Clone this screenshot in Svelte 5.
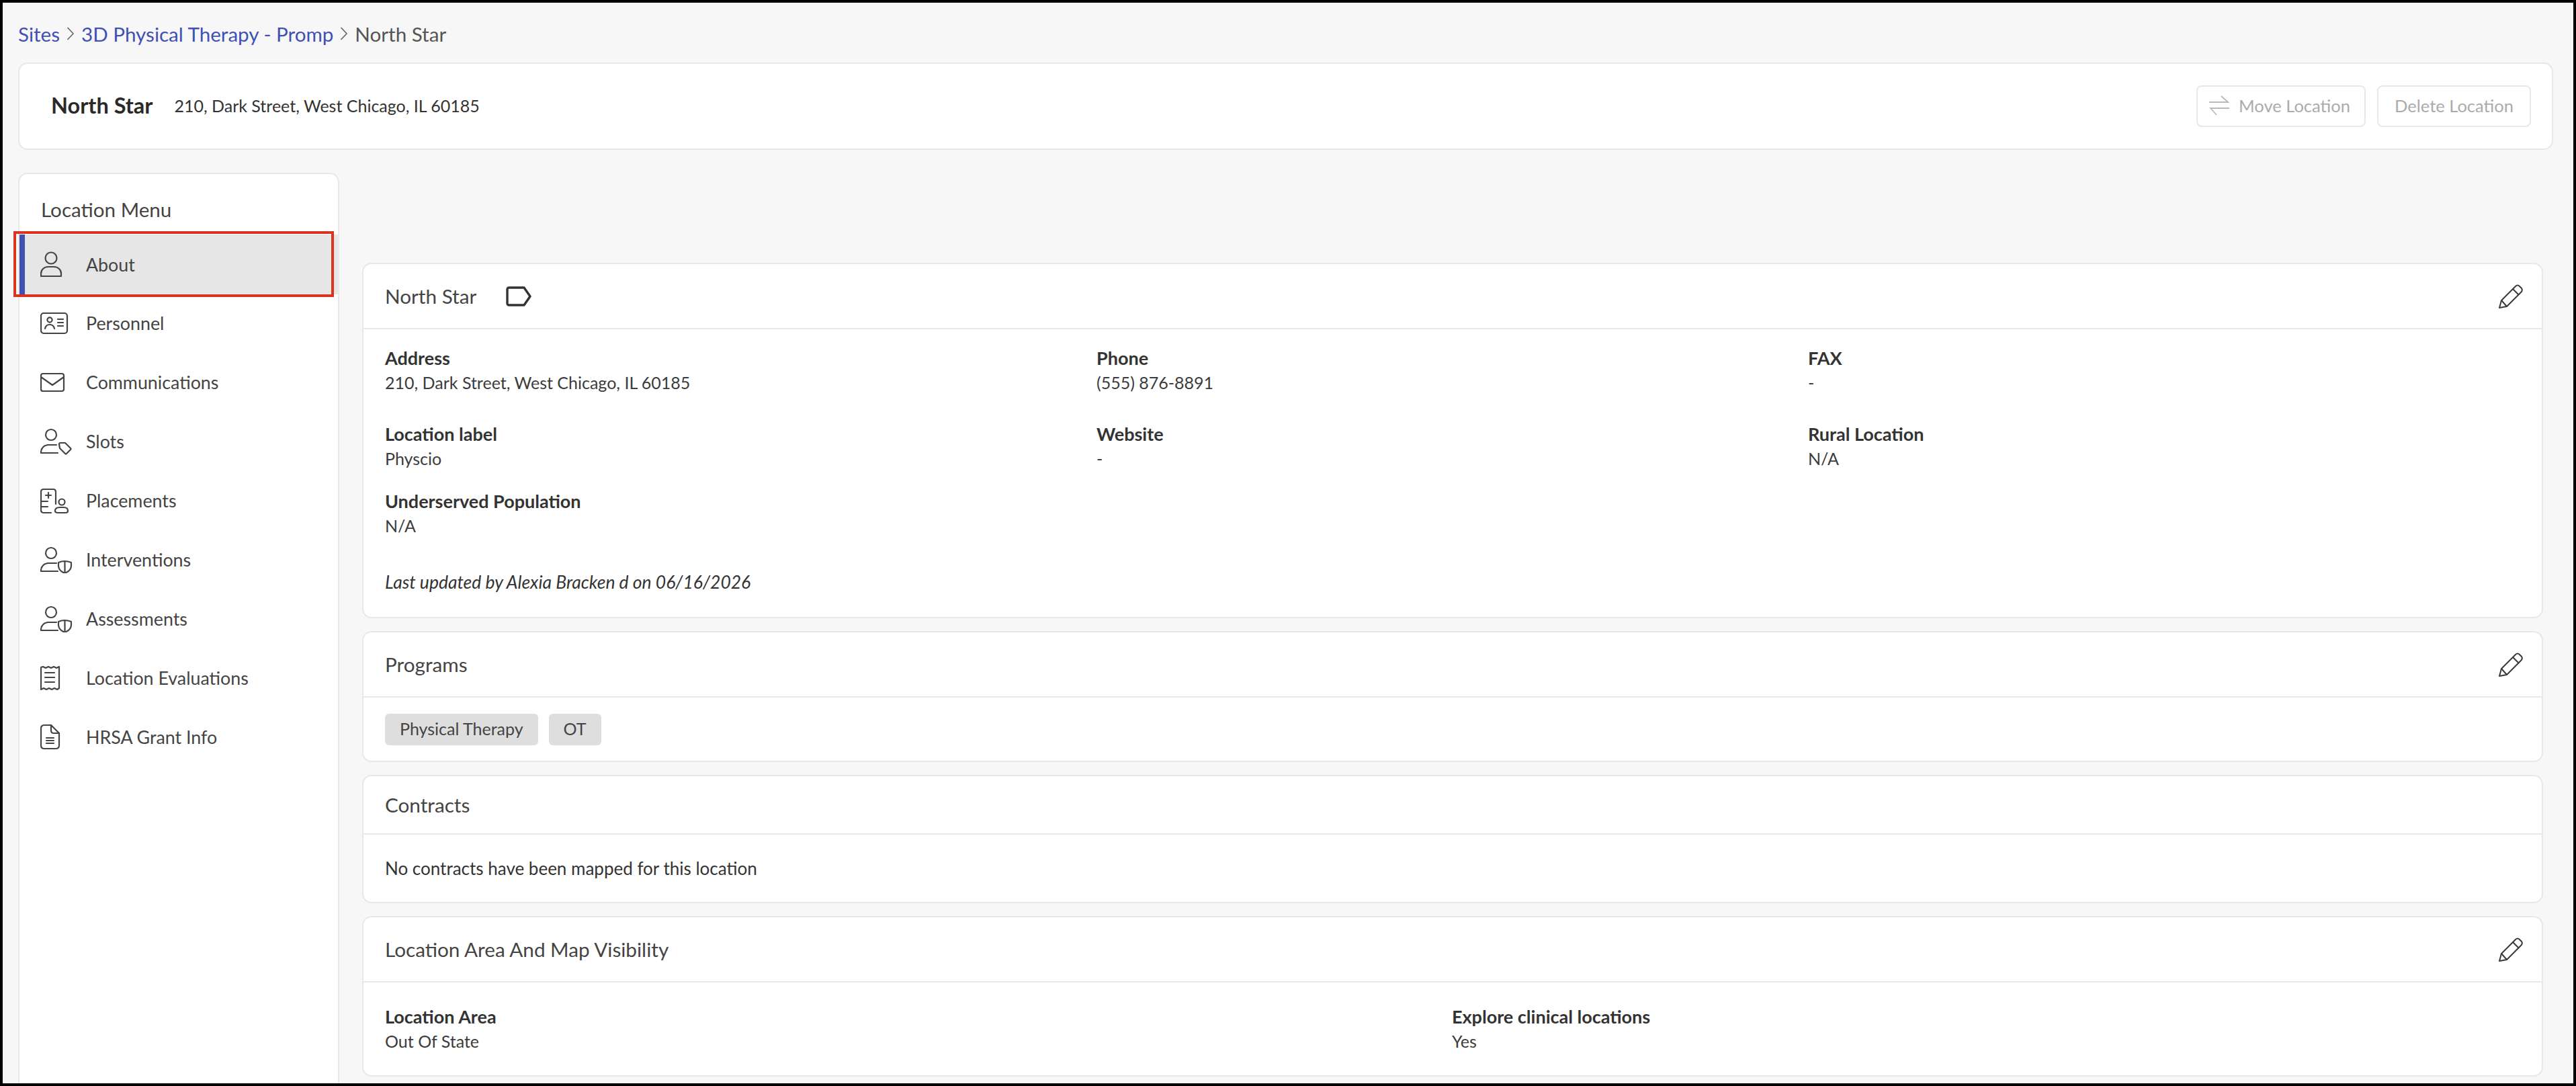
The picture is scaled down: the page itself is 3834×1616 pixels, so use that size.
<script>
  const menu = [
    { label: "About", icon: "about", active: true },
    { label: "Personnel", icon: "personnel" },
    { label: "Communications", icon: "mail" },
    { label: "Slots", icon: "slots" },
    { label: "Placements", icon: "placements" },
    { label: "Interventions", icon: "shield" },
    { label: "Assessments", icon: "shield" },
    { label: "Location Evaluations", icon: "receipt" },
    { label: "HRSA Grant Info", icon: "file" }
  ];

  const details = [
    { label: "Address", value: "210, Dark Street, West Chicago, IL 60185" },
    { label: "Phone", value: "(555) 876-8891" },
    { label: "FAX", value: "-" },
    { label: "Location label", value: "Physcio" },
    { label: "Website", value: "-" },
    { label: "Rural Location", value: "N/A" },
    { label: "Underserved Population", value: "N/A" }
  ];
</script>

{#snippet pencil()}
  <svg class="pencil" width="38" height="38" viewBox="0 0 38 38" fill="none" stroke="#3a3a3a" stroke-width="2" stroke-linejoin="round">
    <path d="M2 36 L5 25 L26 4 Q29 1 32 4 L35 7 Q37 10 34 13 L13 34 Z" />
    <path d="M22 8 L31 17 M5 25 L13 34" />
  </svg>
{/snippet}

{#snippet person()}
  <circle cx="16" cy="10" r="8" />
  <path d="M1 37 H26 M1 37 C1 30 4 26 11 25 H24" />
{/snippet}

<div class="frame">
  <nav class="crumbs">
    <span class="link">Sites</span>
    <svg width="12" height="22" viewBox="0 0 12 22" fill="none" stroke="#666" stroke-width="1.6"><path d="M1.5 2 L10 11 L1.5 20" /></svg>
    <span class="link">3D Physical Therapy - Promp</span>
    <svg width="12" height="22" viewBox="0 0 12 22" fill="none" stroke="#666" stroke-width="1.6"><path d="M1.5 2 L10 11 L1.5 20" /></svg>
    <span>North Star</span>
  </nav>

  <header class="top">
    <h1>North Star</h1>
    <span class="addr">210, Dark Street, West Chicago, IL 60185</span>
    <div class="actions">
      <button class="btn move">
        <svg width="30" height="30" viewBox="0 0 30 30" fill="none" stroke="#b9b9b9" stroke-width="1.8">
          <path d="M0 10 H28 L18 1 M30 19 H2 L11 29" />
        </svg>
        Move Location
      </button>
      <button class="btn del">Delete Location</button>
    </div>
  </header>

  <div class="columns">
    <aside class="side">
      <div class="side-title">Location Menu</div>
      <ul>
        {#each menu as m}
          <li class:active={m.active}>
            <span class="ico">
              <svg width="48" height="40" viewBox="0 0 48 40" fill="none" stroke="#444" stroke-width="2.2" stroke-linecap="round" stroke-linejoin="round">
                {#if m.icon === "about"}
                  <circle cx="16" cy="10" r="8.5" />
                  <path d="M1 37 H31 V33 C31 27 26 23 20 23 H12 C6 23 1 27 1 33 Z" />
                {:else if m.icon === "personnel"}
                  <rect x="1" y="5" width="39" height="30" rx="4" />
                  <circle cx="14" cy="15" r="3.6" />
                  <path d="M7 28 C8 23 11 22 14 22 C17 22 20 23 21 28 M26 14 H34 M26 19 H34 M26 24 H34" />
                {:else if m.icon === "mail"}
                  <rect x="1" y="7" width="34" height="26" rx="3" />
                  <path d="M1 12 L18 24 L35 12" />
                {:else if m.icon === "slots"}
                  {@render person()}
                  <path d="M28 27 Q28 25 30 25 L37 25 L45 33 Q46 34 45 35 L39 41 Q38 42 37 41 L29 33 Z" transform="translate(0 -3)" />
                {:else if m.icon === "placements"}
                  <path d="M16 38 H5 Q1 38 1 34 V7 Q1 3 5 3 H19 Q23 3 23 7 V25 M12 8 V16 M8 12 H16 M1 21 H11 M1 29 H11" />
                  <circle cx="32" cy="22" r="4.5" />
                  <path d="M26 38 Q22 38 22 35 Q22 30 29 30 H35 Q41 30 41 35 Q41 38 38 38 Z" />
                {:else if m.icon === "shield"}
                  {@render person()}
                  <path d="M27 24 Q36 20 46 24 V29 Q46 36 36.5 40 Q27 36 27 29 Z M36.5 22 V40" />
                {:else if m.icon === "receipt"}
                  <path d="M1 4 V37 L5 35 L9 37 L13 35 L17 37 L21 35 L25 37 L28 35 V3 L24 5 L20 3 L16 5 L12 3 L8 5 L4 3 Z" />
                  <path d="M7 12 H21 M7 19 H21 M7 26 H21" />
                {:else if m.icon === "file"}
                  <path d="M16 2 H6 Q1 2 1 7 V32 Q1 37 6 37 H23 Q28 37 28 32 V14 Z" />
                  <path d="M16 2 V10 Q16 14 20 14 H28" />
                  <path d="M9 21 H20 M9 25 H20 M9 29 H20" />
                {/if}
              </svg>
            </span>
            <span>{m.label}</span>
          </li>
        {/each}
      </ul>
      <div class="annot"></div>
    </aside>

    <main>
      <section class="card">
        <div class="head h97">
          <h2>North Star</h2>
          <svg class="tag" width="38" height="30" viewBox="0 0 38 30" fill="none" stroke="#333" stroke-width="3.4" stroke-linejoin="round">
            <path d="M2 5 Q2 2 5 2 H27 L36 15 L27 28 H5 Q2 28 2 25 Z" />
          </svg>
          {@render pencil()}
        </div>
        <div class="body info">
          <div class="grid3">
            {#each details as d}
              <div class="field">
                <strong>{d.label}</strong>
                <span>{d.value}</span>
              </div>
            {/each}
          </div>
          <em>Last updated by Alexia Bracken d on 06/16/2026</em>
        </div>
      </section>

      <section class="card">
        <div class="head h97">
          <h2>Programs</h2>
          {@render pencil()}
        </div>
        <div class="body chips">
          <span class="chip">Physical Therapy</span>
          <span class="chip">OT</span>
        </div>
      </section>

      <section class="card">
        <div class="head h88"><h2>Contracts</h2></div>
        <div class="body empty">No contracts have been mapped for this location</div>
      </section>

      <section class="card">
        <div class="head h97">
          <h2>Location Area And Map Visibility</h2>
          {@render pencil()}
        </div>
        <div class="body grid2">
          <div class="field">
            <strong>Location Area</strong>
            <span>Out Of State</span>
          </div>
          <div class="field">
            <strong>Explore clinical locations</strong>
            <span>Yes</span>
          </div>
        </div>
      </section>
    </main>
  </div>
</div>

<style>
  :global(body) {
    margin: 0;
    background: #000;
  }
  .frame {
    box-sizing: border-box;
    width: 3834px;
    height: 1616px;
    overflow: hidden;
    border: 4px solid #000;
    background: #f7f7f7;
    padding: 0 30px 0 23px;
    font-family: Lato, "Liberation Sans", sans-serif;
    font-size: 25px;
    color: #3c3c3c;
  }
  .crumbs {
    box-sizing: border-box;
    height: 89px;
    padding-top: 3px;
    display: flex;
    align-items: center;
    gap: 10px;
    font-size: 29.6px;
    color: #555;
  }
  .link {
    color: #3f51b5;
  }
  .top {
    box-sizing: border-box;
    height: 130px;
    display: flex;
    align-items: center;
    padding: 0 31px 3px 47px;
    background: #fff;
    border: 2px solid #e8e8e8;
    border-radius: 14px;
  }
  h1 {
    margin: 0 32px 0 0;
    font-size: 32.5px;
    font-weight: 700;
    color: #2a2a2a;
  }
  .addr {
    color: #333;
  }
  .actions {
    margin: 3px 0 0 auto;
    display: flex;
    gap: 17px;
  }
  .btn {
    box-sizing: border-box;
    height: 62px;
    display: flex;
    align-items: center;
    justify-content: center;
    gap: 14px;
    background: #fff;
    border: 2px solid #e8e8e8;
    border-radius: 8px;
    color: #ababab;
    font: inherit;
    font-size: 25.5px;
    padding: 0 0 3px;
  }
  .move {
    width: 252px;
    padding-right: 4px;
  }
  .del {
    width: 229px;
  }
  .columns {
    display: flex;
    align-items: flex-start;
    gap: 34px;
    margin-top: 34px;
  }
  .side {
    position: relative;
    box-sizing: border-box;
    width: 478px;
    height: 1400px;
    flex: none;
    background: #fff;
    border: 2px solid #e8e8e8;
    border-radius: 14px 14px 0 0;
  }
  .side-title {
    height: 90px;
    padding: 14px 0 0 32px;
    box-sizing: border-box;
    display: flex;
    align-items: center;
    font-size: 29.6px;
    color: #444;
  }
  ul {
    list-style: none;
    margin: 0;
    padding: 0;
    font-size: 26.8px;
  }
  li {
    height: 88px;
    display: flex;
    align-items: center;
    padding-left: 31px;
    color: #444;
  }
  li.active {
    height: 89px;
    margin-bottom: -1px;
    background: #e6e6e6;
    border-left: 8px solid #3f51b5;
    padding-left: 23px;
  }
  .ico {
    width: 68px;
    flex: none;
    display: flex;
  }
  .annot {
    position: absolute;
    left: -9px;
    top: 85px;
    width: 477px;
    height: 98px;
    box-sizing: border-box;
    border: 4px solid #db3222;
    pointer-events: none;
  }
  main {
    width: 3246px;
    flex: none;
    padding-top: 134px;
    display: flex;
    flex-direction: column;
    gap: 19px;
  }
  .card {
    background: #fff;
    border: 2px solid #e8e8e8;
    border-radius: 14px;
  }
  .head {
    box-sizing: border-box;
    display: flex;
    align-items: center;
    padding: 0 27px 0 32px;
    border-bottom: 2px solid #e8e8e8;
  }
  .h97 {
    height: 97px;
  }
  .h88 {
    height: 87px;
  }
  h2 {
    margin: 0;
    font-size: 29.7px;
    font-weight: 400;
    color: #444;
  }
  .tag {
    margin-left: 44px;
  }
  .pencil {
    margin-left: auto;
  }
  .body {
    padding: 0 32px;
  }
  .info {
    padding-top: 25px;
    padding-bottom: 34px;
  }
  .grid3 {
    display: grid;
    grid-template-columns: repeat(3, 1059px);
    grid-template-rows: 113px 100px 72px;
  }
  .field {
    display: flex;
    flex-direction: column;
    line-height: 36px;
  }
  .field strong {
    font-size: 27px;
    font-weight: 700;
    color: #333;
  }
  em {
    display: block;
    margin-top: 48px;
    line-height: 36px;
    font-size: 26.5px;
    color: #333;
  }
  .chips {
    display: flex;
    gap: 16px;
    padding-top: 24px;
    padding-bottom: 23px;
  }
  .chip {
    height: 47px;
    display: flex;
    align-items: center;
    padding: 0 22px 4px;
    box-sizing: border-box;
    background: #dedede;
    border-radius: 6px;
    color: #444;
  }
  .empty {
    height: 100px;
    display: flex;
    align-items: center;
    font-size: 26px;
    color: #333;
  }
  .grid2 {
    display: grid;
    grid-template-columns: repeat(2, 1588px);
    padding-top: 33px;
    padding-bottom: 33px;
  }
</style>
